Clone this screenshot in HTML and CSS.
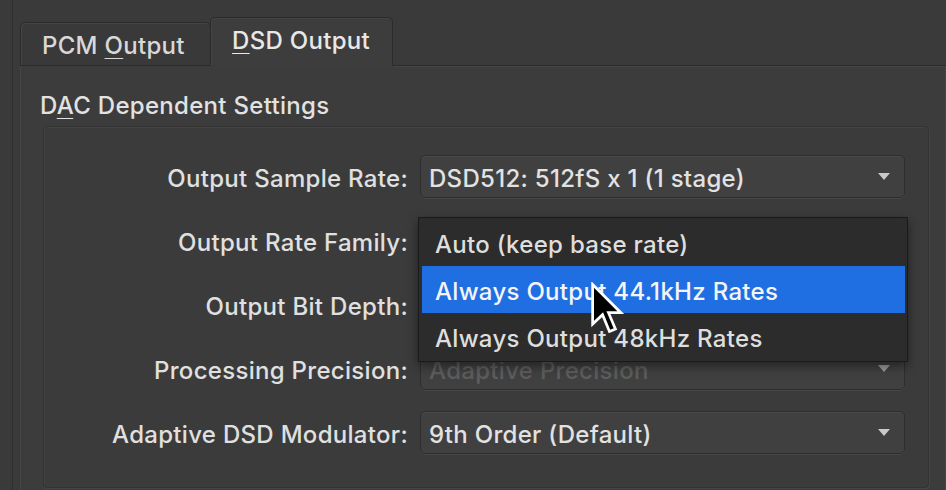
FILE: index.html
```html
<!DOCTYPE html>
<html>
<head>
<meta charset="utf-8">
<link rel="stylesheet" href="styles.css">
</head>
<body>
<div class="window">
  <div class="tabs">
    <div class="tab"><span>PCM <u>O</u>utput</span></div>
    <div class="tab active"><span><u>D</u>SD Output</span></div>
    <div class="tab-fill"></div>
  </div>
  <div class="pane">
    <div class="group-title">D<u>A</u>C Dependent Settings</div>
    <div class="group">
      <div class="form">
        <div class="label">Output Sample Rate:</div>
        <div class="combo"><span>DSD512: 512fS x 1 (1 stage)</span><i class="arrow"></i></div>
        <div class="label">Output Rate Family:</div>
        <div class="combo"><span>Auto (keep base rate)</span><i class="arrow"></i></div>
        <div class="label">Output Bit Depth:</div>
        <div class="combo"><span>1 bit</span><i class="arrow"></i></div>
        <div class="label">Processing Precision:</div>
        <div class="combo disabled"><span>Adaptive Precision</span><i class="arrow"></i></div>
        <div class="label">Adaptive DSD Modulator:</div>
        <div class="combo"><span>9th Order (Default)</span><i class="arrow"></i></div>
      </div>
      <div class="popup">
        <div class="item">Auto (keep base rate)</div>
        <div class="item selected">Always Output 44.1kHz Rates</div>
        <div class="item">Always Output 48kHz Rates</div>
      </div>
    </div>
  </div>
</div>
<svg class="cursor" width="35" height="52" viewBox="0 0 14 21">
  <path d="M1 1 L1 17 L5 13.2 L7.8 20 L10.2 19 L7.4 12.4 L12.4 12.4 Z" fill="#000" stroke="#fff" stroke-width="1.1" stroke-linejoin="miter"/>
</svg>
</body>
</html>
```

FILE: styles.css
```css
html, body {
  margin: 0;
  padding: 0;
  background: #3a3a3a;
  width: 946px;
  height: 490px;
  overflow: hidden;
  font-family: "Inter", "Liberation Sans", sans-serif;
  font-size: 24px;
  font-weight: 500;
  letter-spacing: 0.3px;
  color: #e2e2e2;
  position: relative;
}

u {
  text-decoration: underline;
  text-underline-offset: 4px;
  text-decoration-thickness: 1px;
}

.window {
  margin-left: 12px;
  border-left: 1px solid #2f2f2f;
  padding: 17px 0 0 7px;
  height: 473px;
  overflow: hidden;
}

.tabs {
  display: flex;
  align-items: flex-end;
  height: 49px;
}

.tab {
  box-sizing: border-box;
  height: 44px;
  padding: 3px 0 0 21px;
  display: flex;
  align-items: center;
  background: #393939;
  border: 1px solid #2b2b2b;
  border-radius: 5px 5px 0 0;
  box-shadow: inset 1px 1px 0 #444;
  color: #d8d8d8;
  white-space: nowrap;
  width: 191px;
}

.tab.active {
  height: 49px;
  width: 183px;
  padding: 0 0 2px 21px;
  background: #3d3d3d;
  border-bottom: 1px solid #3d3d3d;
  color: #e8e8e8;
  margin-left: -1px;
}

.tab-fill {
  flex: 1;
  height: 1px;
  border-bottom: 1px solid #2b2b2b;
  box-shadow: 0 1px 0 #454545;
}

.pane {
  box-sizing: border-box;
  border-left: 1px solid #454545;
  background: #3c3c3c;
  padding: 25px 0 0 22px;
  height: 424px;
  margin-right: 1px;
  box-shadow: 1px 0 0 #444;
}

.group-title {
  line-height: 26px;
  height: 26px;
  padding-top: 2px;
  margin-left: -3px;
  margin-bottom: 7px;
}

.group {
  position: relative;
  box-sizing: border-box;
  width: 886px;
  height: 362px;
  border: 1px solid #333;
  border-radius: 4px;
  box-shadow: inset 1px 1px 0 #424242, 1px 1px 0 #444;
  background: #3b3b3b;
  padding-top: 28px;
}

.form {
  display: grid;
  grid-template-columns: 364px 485px;
  column-gap: 12px;
  row-gap: 21px;
  grid-auto-rows: 43px;
}

.label {
  display: flex;
  align-items: center;
  justify-content: flex-end;
  padding-top: 3px;
  white-space: nowrap;
  color: #e0e0e0;
}

.combo {
  box-sizing: border-box;
  display: flex;
  align-items: center;
  justify-content: space-between;
  padding: 0 14px 0 8px;
  background: #404040;
  border: 1px solid #2e2e2e;
  border-radius: 5px;
  box-shadow: inset 0 1px 0 #4a4a4a, 0 1px 0 #464646;
  white-space: nowrap;
}

.combo span {
  padding-top: 3px;
}

.combo.disabled {
  color: #5d5d5d;
}

.arrow {
  display: block;
  width: 0;
  height: 0;
  border-left: 6px solid transparent;
  border-right: 6px solid transparent;
  border-top: 7px solid #c9c9c9;
}

.combo.disabled .arrow {
  border-top-color: #9a9a9a;
}

.popup {
  position: absolute;
  left: 374px;
  top: 90px;
  width: 490px;
  box-sizing: border-box;
  background: #2c2c2c;
  border: 1px solid #1a1a1a;
  padding: 1px 2px 1px 3px;
  box-shadow: 0 4px 10px rgba(0,0,0,0.45);
}

.item {
  box-sizing: border-box;
  height: 47px;
  display: flex;
  align-items: center;
  padding: 3px 0 0 13px;
  white-space: nowrap;
  color: #dedede;
}

.item.selected {
  background: #1f6fe3;
  color: #f4f4f4;
}

.cursor {
  position: absolute;
  left: 590px;
  top: 282px;
}
```
